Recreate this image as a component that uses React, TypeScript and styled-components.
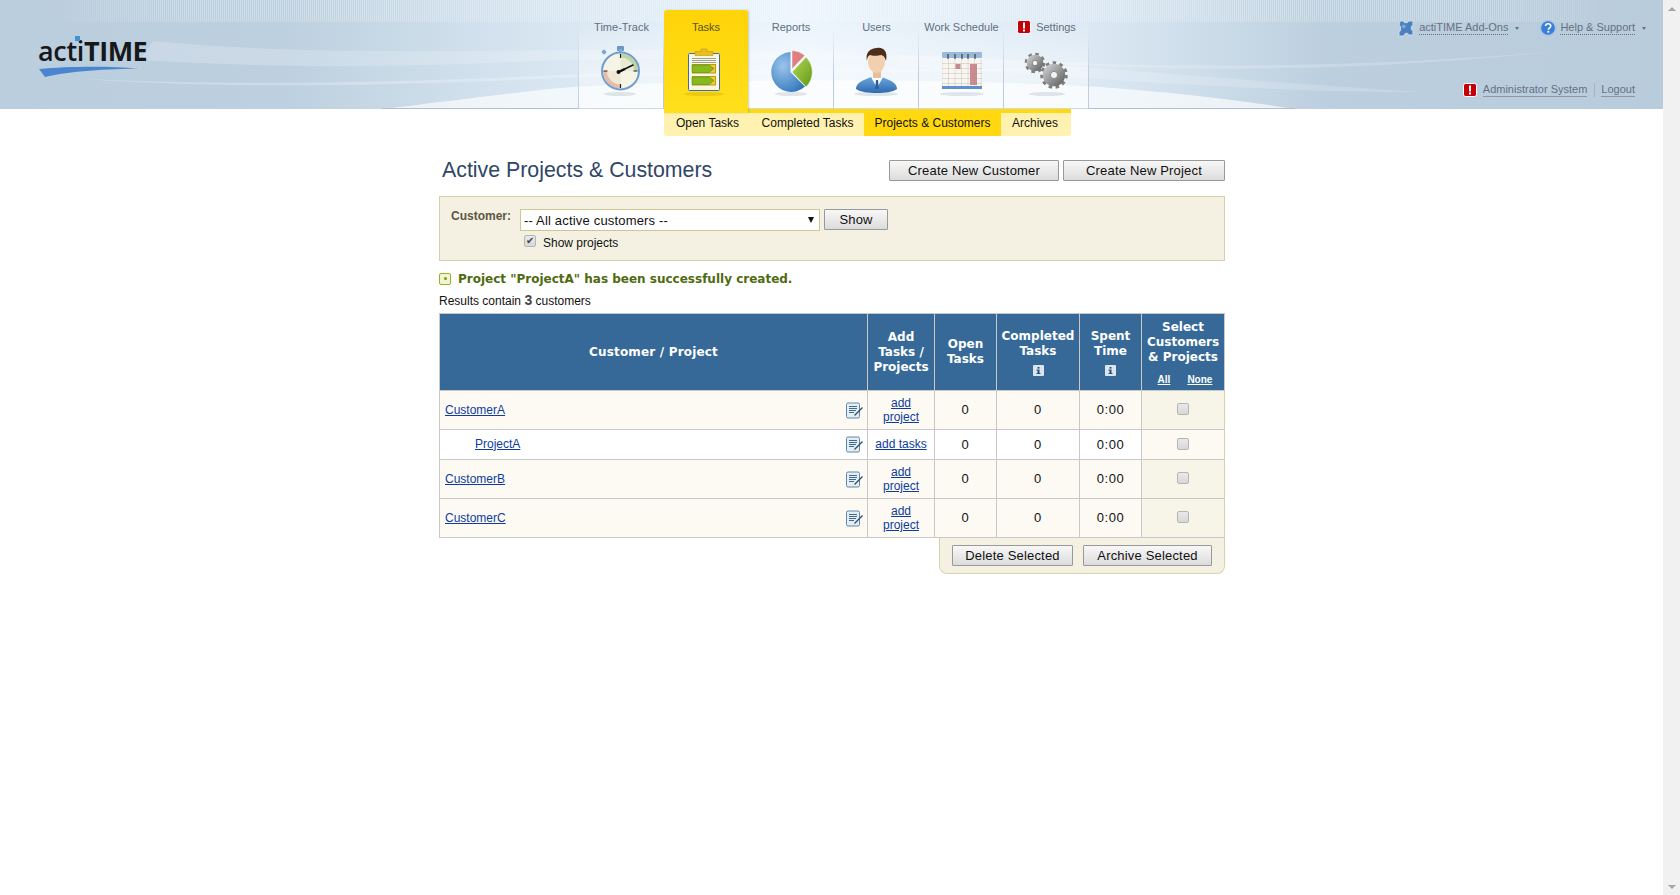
import React from "react";
import styled, { createGlobalStyle } from "styled-components";

const Global = createGlobalStyle`
  html, body { margin: 0; padding: 0; height: 100%; overflow: hidden; background: #fff; }
  body { font-family: "Liberation Sans", Arial, sans-serif; font-size: 12px; color: #111; }
  #root { height: 100%; }
`;

const Page = styled.div`display: flex; width: 1680px; height: 895px; overflow: hidden;`;
const Main = styled.div`flex: 1; min-width: 0;`;
const Scrollbar = styled.div`
  width: 17px; background: #f1f1f1; display: flex; flex-direction: column;
  justify-content: space-between; align-items: center; padding: 7px 0 6px; box-sizing: border-box;
`;
const Arrow = styled.div<{ $down?: boolean }>`
  width: 0; height: 0; border-left: 4px solid transparent; border-right: 4px solid transparent;
  ${(p) => (p.$down ? "border-top: 4px solid #a3a3a3;" : "border-bottom: 4px solid #a3a3a3;")}
`;

const Header = styled.header`position: relative; height: 109px; display: flex; box-sizing: border-box;`;
const HeaderArt = styled.svg`position: absolute; left: 0; top: 0; z-index: 0;`;
const LogoBlock = styled.div`
  position: relative; z-index: 1; width: 578px; flex: none; box-sizing: border-box; padding: 35px 0 0 38px;
`;
const LogoWrap = styled.div`position: relative; width: 110px;`;
const LogoText = styled.div`
  font-family: "Open Sans", "DejaVu Sans", sans-serif; font-size: 27px; line-height: 32px;
  color: #17181a; font-weight: 600; letter-spacing: -0.3px; white-space: nowrap;
  b { font-weight: 700; letter-spacing: -0.5px; }
`;
const LogoDot = styled.span`
  position: absolute; left: 37px; top: 1px; width: 5px; height: 5px; background: #3f93d6;
`;
const LogoSwoosh = styled.svg`display: block; margin: -1px 0 0 1px;`;

const Nav = styled.nav`
  position: relative; z-index: 1; display: flex; flex: none; border-left: 1px solid #c4d3e2;
  border-image: linear-gradient(to bottom, transparent 20%, #bccde0) 1;
`;
const Tab = styled.div<{ $w: number; $active?: boolean }>`
  position: relative; width: ${(p) => p.$w}px; box-sizing: border-box; margin-top: 10px; height: ${(p) => (p.$active ? 103 : 99)}px;
  padding-top: 10px; display: flex; flex-direction: column; align-items: center;
  border-radius: 3px 3px 0 0;
  background: ${(p) =>
    p.$active
      ? "linear-gradient(to bottom, #ffd408, #ffdf1c)"
      : "linear-gradient(to bottom, rgba(255,255,255,0) 10%, rgba(255,255,255,.42) 60%)"};
  ${(p) => p.$active && "box-shadow: 1px 0 2px rgba(120,120,90,.35); z-index: 2;"}
  ${(p) =>
    !p.$active &&
    `&::after { content: ""; position: absolute; right: 0; top: 18px; bottom: 0; width: 1px;
       background: linear-gradient(to bottom, rgba(188,205,224,0), #bccde0 60%); }`}
`;
const TabLabel = styled.div<{ $active?: boolean }>`
  display: flex; align-items: center; gap: 5px; height: 14px; font-size: 11px; line-height: 14px;
  white-space: nowrap; color: ${(p) => (p.$active ? "#5a5320" : "#626f7f")};
`;
const TabIcon = styled.svg`display: block; margin-top: 8px;`;

const RightBlock = styled.div`
  position: relative; z-index: 1; flex: 1; display: flex; flex-direction: column; align-items: flex-end;
  padding-top: 21px; box-sizing: border-box;
`;
const TopLinks = styled.div`display: flex; align-items: center; gap: 21px; padding-right: 17px; height: 14px;`;
const TopLink = styled.div`display: flex; align-items: center; gap: 4px; font-size: 11px; color: #65717f;`;
const Dotted = styled.span`border-bottom: 1px dotted #66717e; line-height: 13px;`;
const Caret = styled.span`
  width: 0; height: 0; border-left: 2.5px solid transparent; border-right: 2.5px solid transparent;
  border-top: 3px solid #66717e; margin-left: 3px;
`;
const UserLinks = styled.div`display: flex; align-items: center; margin-top: 48px; padding-right: 28px; height: 14px;`;
const UserLink = styled.span`border-bottom: 1px solid #8a97a5; font-size: 11px; line-height: 13px; color: #65717f;`;
const UserSep = styled.span`width: 1px; height: 14px; background: #a3b3c3; margin: 0 6px 0 7px;`;
const AlertWrap = styled.span`display: flex; margin-right: 6px;`;

const SubNav = styled.div`
  display: flex; width: 407px; height: 27px; margin-left: 664px; box-sizing: border-box; background: #fff1b0;
  border-top: 4px solid #ffd80f; border-radius: 0 0 3px 3px; overflow: hidden;
`;
const SubTab = styled.div<{ $w: number; $active?: boolean }>`
  width: ${(p) => p.$w}px; display: flex; align-items: center; justify-content: center;
  font-size: 12px; color: #111; white-space: nowrap; padding-bottom: 3px; box-sizing: border-box;
  background: ${(p) => (p.$active ? "#ffd80f" : "#fff1b0")};
`;

const Content = styled.main`width: 786px; margin-left: 439px;`;
const TitleRow = styled.div`display: flex; align-items: center; margin-top: 24px; height: 21px;`;
const Title = styled.h1`
  flex: 1; margin: 0 0 0 3px; font-size: 21.33px; font-weight: 400; color: #2f4666; white-space: nowrap;
`;
const Buttons = styled.div`display: flex; gap: 4px;`;
const Btn = styled.button<{ $w: number }>`
  width: ${(p) => p.$w}px; height: 21px; padding: 0; box-sizing: border-box; font-family: inherit;
  font-size: 13px; letter-spacing: .18px; color: #111; border: 1px solid #999; border-radius: 1px;
  background: linear-gradient(to bottom, #f8f8f8, #dcdcdc);
`;
const Filter = styled.section`
  margin-top: 15px; height: 65px; box-sizing: border-box; border: 1px solid #d6cfaa; background: #f5f1e2;
  display: flex; padding: 12px 0 0 12px;
`;
const FilterLabel = styled.label`
  width: 69px; font-size: 12px; font-weight: 700; color: #5c5743; line-height: 14px; flex: none; margin-left: -1px;
`;
const FilterCol = styled.div`display: flex; flex-direction: column;`;
const FilterRow = styled.div`display: flex; gap: 4px;`;
const SelectWrap = styled.div`position: relative; width: 300px; height: 22px;`;
const Select = styled.select`
  appearance: none; width: 100%; height: 100%; box-sizing: border-box; border: 1px solid #d0c690;
  background: #fff; font: 13px "Liberation Sans", Arial, sans-serif; letter-spacing: .18px; color: #111;
  padding: 0 0 0 3px; border-radius: 0; outline: none;
`;
const SelectArrow = styled.span`
  position: absolute; right: 6px; top: 8px; width: 0; height: 0; border-left: 3px solid transparent;
  border-right: 3px solid transparent; border-top: 6px solid #111;
`;
const CheckRow = styled.label`display: flex; align-items: center; gap: 7px; margin: 5px 0 0 4px; height: 13px; font-size: 12px; color: #111;`;
const Check = styled.input`
  appearance: none; margin: 0; width: 12px; height: 12px; border: 1px solid #b5b5b5; border-radius: 2px;
  background: linear-gradient(to bottom, #e9e9e9, #d8d8d8); position: relative; box-sizing: border-box; flex: none;
  &:checked::before {
    content: "✔"; position: absolute; left: 1px; top: -1px; font: 10px/12px "DejaVu Sans", sans-serif; color: #444;
  }
`;
const FilterCheck = styled(Check)`margin-top: -3px;`;
const Message = styled.div`
  display: flex; align-items: center; gap: 7px; margin-top: 10px; height: 15px;
  font-family: "DejaVu Sans", Verdana, sans-serif; font-weight: 700; font-size: 12px; color: #4f6a10; white-space: nowrap;
`;
const MsgIcon = styled.span`
  width: 10px; height: 10px; border: 1px solid #9ab02c; border-radius: 2px; background: #f1f5d2;
  display: flex; align-items: center; justify-content: center; flex: none;
  &::before { content: ""; width: 3px; height: 3px; border-radius: 50%; background: #7f9a1a; }
`;
const Results = styled.div`margin-top: 6px; height: 16px; line-height: 16px; font-size: 12px; color: #111; white-space: nowrap;`;
const Count = styled.b`font-size: 14px; font-weight: 700; color: #444;`;

const Table = styled.table`
  border-collapse: collapse; table-layout: fixed; width: 785px; margin-top: 5px;
`;
const Th = styled.th`
  background: #366997; color: #fff; border: 1px solid #c8c8c8; padding: 0; text-align: center; vertical-align: middle;
  font-family: "DejaVu Sans", Verdana, sans-serif; font-size: 12px; line-height: 15px; font-weight: 700; height: 76px;
`;
const WideTh = styled(Th)`letter-spacing: .17px;`;
const SelectTh = styled(Th)`padding-top: 2px; box-sizing: border-box;`;
const HeadLinks = styled.div`
  display: flex; justify-content: center; gap: 17px; margin-top: 9px; padding-left: 4px;
  font: 700 10px/12px "Liberation Sans", Arial, sans-serif;
`;
const HeadLink = styled.a`color: #fff; text-decoration: underline;`;
const InfoIcon = styled.svg`display: block; margin: 6px auto 0;`;
const Tr = styled.tr<{ $h: number }>`height: ${(p) => p.$h}px;`;
const Td = styled.td<{ $project?: boolean }>`
  border: 1px solid #c8c8c8; padding: 0; text-align: center; vertical-align: middle;
  background: ${(p) => (p.$project ? "#fff" : "#fdfaf3")};
  font-size: 13px; letter-spacing: .6px; color: #111;
`;
const NumberTd = styled(Td)`padding-bottom: ${(p) => (p.$project ? 0 : 2)}px;`;
const SelectTd = styled(Td)`
  background: ${(p) => (p.$project ? "#fcfaf3" : "#f7f4e8")};
  border-right-color: #d8d2ab; border-left-color: #d0cbb0;
`;
const NameCell = styled.div<{ $project?: boolean }>`
  display: flex; align-items: center; justify-content: space-between;
  padding: 0 4px 0 ${(p) => (p.$project ? 35 : 5)}px; letter-spacing: 0;
`;
const RowLink = styled.a<{ $raised?: boolean }>`
  font-size: 12px; color: #0d3b9e; text-decoration: underline; letter-spacing: 0;
  ${(p) => p.$raised && "margin-bottom: 2px;"}
`;
const AddCell = styled.div<{ $raised?: boolean }>`
  padding: 0 6px ${(p) => (p.$raised ? 2 : 0)}px; line-height: 14px; letter-spacing: 0; font-size: 12px;
`;
const RowCheck = styled(Check)`display: block; margin: 0 auto 2px;`;
const Footer = styled.div`
  display: flex; gap: 10px; justify-content: center; align-items: center; width: 286px; height: 36px; margin-left: auto;
  box-sizing: border-box; border: 1px solid #d8d2ab; border-top: 0; border-radius: 0 0 8px 8px; background: #f5f1e2;
  padding-bottom: 1px;
`;

const Alert = () => (
  <svg width="14" height="14" viewBox="0 0 14 14">
    <rect x="0.5" y="0.5" width="13" height="13" rx="2" fill="#c40006" stroke="#fff" />
    <rect x="6" y="2.5" width="2" height="6" fill="#fff" />
    <rect x="6" y="9.5" width="2" height="2" fill="#fff" />
  </svg>
);

const Shadow = ({ cx, rx }: { cx: number; rx: number }) => (
  <ellipse cx={cx} cy="52" rx={rx} ry="2" fill="#7f93a6" opacity=".22" />
);

const Stopwatch = () => (
  <TabIcon width="60" height="60" viewBox="0 0 60 60">
    <Shadow cx={28} rx={16} />
    <rect x="25" y="4" width="7" height="5" rx="1" fill="#6b97c8" />
    <rect x="27" y="7" width="3" height="4" fill="#8aaed4" />
    <rect x="10" y="8" width="4" height="4" rx="1" transform="rotate(-40 12 10)" fill="#7fa6cf" />
    <circle cx="28.500" cy="29" r="18.500" fill="#f6f4e4" stroke="#6f9ed2" strokeWidth="2" />
    <path d="M28.500 29 L28.500 11.500 A17.500 17.500 0 0 1 46 29 Z" fill="#a9c48c" opacity=".7" />
    <path d="M28.500 29 L11 29 A17.500 17.500 0 0 0 28.500 46.500 Z" fill="#dca691" opacity=".7" />
    <circle cx="28.500" cy="29" r="13.500" fill="#f6f4e4" opacity=".75" />
    <path d="M28.500 12v4M28.500 42v4M11.500 29h4M41.500 29h4" stroke="#222" strokeWidth="1.200" />
    <path d="M26.500 30 L41 23" stroke="#111" strokeWidth="1.500" strokeLinecap="round" />
    <path d="M26.500 30 L33 27" stroke="#111" strokeWidth="2.400" />
    <circle cx="26.500" cy="30" r="2" fill="#111" />
  </TabIcon>
);

const Clipboard = () => (
  <TabIcon width="60" height="60" viewBox="2 0 60 60">
    <ellipse cx="30" cy="52" rx="20" ry="2" fill="#b49a05" opacity=".28" />
    <rect x="14.500" y="11.500" width="31" height="37" rx="1" fill="#f9f6e4" stroke="#3a6cb6" />
    <path d="M21 13.500V9.500h6V7h6v2.500h6v4z" fill="#e8bf1c" stroke="#c9a212" strokeWidth=".7" />
    <path d="M18 16.500h24M18 18.500h24M18 20.500h24" stroke="#8a8a80" strokeWidth=".8" />
    <rect x="18.500" y="22.500" width="23" height="8.500" fill="#f6cc2a" stroke="#b69a18" />
    <path d="M18 23h17l5 3.500-5 4H18z" fill="#86b91f" stroke="#5e8d12" strokeWidth=".6" />
    <rect x="18.500" y="34.500" width="23" height="8.500" fill="#f6cc2a" stroke="#b69a18" />
    <path d="M18 35h17l5 3.500-5 4H18z" fill="#86b91f" stroke="#5e8d12" strokeWidth=".6" />
  </TabIcon>
);

const Pie = () => (
  <TabIcon width="60" height="60" viewBox="0 0 60 60">
    <defs>
      <radialGradient id="pieB" cx=".35" cy=".35" r=".8">
        <stop offset="0" stopColor="#9cc4ea" />
        <stop offset="1" stopColor="#2c74bc" />
      </radialGradient>
      <linearGradient id="pieG" x1="0" y1="0" x2="1" y2="1">
        <stop offset="0" stopColor="#b8d65a" />
        <stop offset="1" stopColor="#5f9a14" />
      </linearGradient>
    </defs>
    <Shadow cx={30} rx={16} />
    <path d="M29.500 10 A20 20 0 1 0 44 44.500 L29.500 30 Z" fill="url(#pieB)" />
    <path d="M31 8.500 A21 21 0 0 1 44 13.500 L31 27 Z" fill="#e07f80" stroke="#fff" strokeWidth=".5" />
    <path d="M45 15 A21 21 0 0 1 45 45 L31 30 Z" fill="url(#pieG)" stroke="#fff" strokeWidth=".5" />
  </TabIcon>
);

const Person = () => (
  <TabIcon width="60" height="60" viewBox="0 0 60 60">
    <defs>
      <linearGradient id="suit" x1="0" y1="0" x2="0" y2="1">
        <stop offset="0" stopColor="#6aa6dc" />
        <stop offset="1" stopColor="#2f6bae" />
      </linearGradient>
    </defs>
    <Shadow cx={29} rx={22} />
    <path d="M9 47c0-4 3-7 8-9l7-3h11l7 3c5 2 8 5 8 9-4 3-12 4-20 4s-17-1-21-4z" fill="url(#suit)" />
    <path d="M24 35l6 11 6-11-6-2z" fill="#fff" />
    <path d="M29 38h2l1 9h-4z" fill="#2b5f9e" />
    <rect x="26" y="27" width="8" height="9" fill="#e9bf9a" />
    <ellipse cx="29.500" cy="20" rx="8.500" ry="11" fill="#f2cfae" />
    <path d="M20 19c-2-8 3-13 10-13 7-1 11 4 9 13-1-4-3-6-5-6-3 1-9 1-11 0-2 1-3 3-3 6z" fill="#4d2d1c" />
  </TabIcon>
);

const Calendar = () => (
  <TabIcon width="60" height="60" viewBox="0 0 60 60">
    <defs>
      <pattern id="calGrid" width="6.500" height="5" patternUnits="userSpaceOnUse" x="17" y="17">
        <path d="M6.500 0V5M0 5H6.500" stroke="#8a8f9a" strokeWidth=".5" fill="none" />
      </pattern>
    </defs>
    <ellipse cx="30" cy="52" rx="22" ry="2" fill="#7f93a6" opacity=".22" />
    <rect x="10" y="10" width="40" height="37" rx="1" fill="#f8f6ee" />
    <rect x="10" y="10" width="40" height="6" rx="1" fill="#9bbadb" />
    <rect x="10" y="44" width="40" height="3" fill="#5e8fce" />
    <rect x="23.500" y="22" width="5" height="5" fill="#c8878c" />
    <rect x="38" y="22" width="7" height="21" fill="#cf8a8e" />
    <rect x="10" y="17" width="40" height="27" fill="url(#calGrid)" />
    <path d="M16 12v5M23 12v5M30 12v5M36 12v5M43 12v5" stroke="#222" strokeWidth="1" />
  </TabIcon>
);

const Gear = ({ cx, cy, r, n }: { cx: number; cy: number; r: number; n: number }) => {
  const c = 2 * Math.PI * r;
  const d = c / n / 2;
  return (
    <g>
      <circle cx={cx} cy={cy} r={r} fill="none" stroke="#7d7d7d" strokeWidth={r * 0.3} strokeDasharray={`${d} ${d}`} />
      <circle cx={cx} cy={cy} r={r * 0.62} fill="none" stroke="url(#gearFill)" strokeWidth={r * 0.62} />
      <circle cx={cx} cy={cy} r={r * 0.3} fill="none" stroke="#666" strokeWidth=".7" />
    </g>
  );
};

const Gears = () => (
  <TabIcon width="60" height="60" viewBox="0 0 60 60">
    <defs>
      <linearGradient id="gearFill" x1="0" y1="0" x2="1" y2="1">
        <stop offset="0" stopColor="#c4c4c4" />
        <stop offset="1" stopColor="#6e6e6e" />
      </linearGradient>
    </defs>
    <Shadow cx={30} rx={18} />
    <Gear cx={18} cy={21} r={9} n={8} />
    <Gear cx={37} cy={33} r={12} n={11} />
  </TabIcon>
);

const PuzzleIcon = () => (
  <svg width="17" height="17" viewBox="0 0 16 16">
    <path d="M2 1h3l1 1.500h3l1-1.500h4v4l-1.500 1v3l1.500 1v4h-4l-1-1.500H7L5 15H1v-4l1.500-1V6L1 5z" fill="#4a7fc0" stroke="#cfdcea" strokeWidth=".8" />
    <circle cx="5.500" cy="6" r="1.800" fill="#7ea7d6" />
  </svg>
);
const HelpIcon = () => (
  <svg width="16" height="16" viewBox="0 0 14 14">
    <circle cx="7" cy="7" r="6.500" fill="#3a7ed6" stroke="#a9c5e6" />
    <path d="M4.800 5.300C4.900 3.900 6 3.300 7.100 3.300c1.300 0 2.300.8 2.300 1.900 0 1.700-2.100 1.700-2.100 3.300" fill="none" stroke="#fff" strokeWidth="1.400" />
    <rect x="6.500" y="9.500" width="1.600" height="1.600" fill="#fff" />
  </svg>
);
const EditIcon = () => (
  <svg width="17" height="17" viewBox="0 0 17 17">
    <rect x="0.500" y="1" width="13" height="15" rx="1.500" fill="#e6eef5" stroke="#5f88ac" />
    <path d="M3 4.500h8M3 6.500h8M3 8.500h7M3 10.500h5" stroke="#3e6a90" />
    <path d="M16.500 5.500 L8.500 13.500" stroke="#2f4f6a" strokeWidth="1.300" />
    <path d="M7.500 14.500l1-1.500 .8.700z" fill="#e7a81a" />
  </svg>
);
const Info = () => (
  <InfoIcon width="11" height="11" viewBox="0 0 11 11">
    <rect width="11" height="11" rx="1" fill="#dbe6ef" />
    <rect x="4.500" y="2" width="2" height="1.600" fill="#24527e" />
    <path d="M3.500 4.500h3v3.500h1v1H3.500V8h1V5.500h-1z" fill="#24527e" />
  </InfoIcon>
);

const HeaderBackground = () => (
  <HeaderArt width="1663" height="109" viewBox="0 0 1663 109" preserveAspectRatio="none">
    <defs>
      <linearGradient id="sky" x1="0" y1="0" x2="1" y2="0">
        <stop offset="0" stopColor="#bbcedd" />
        <stop offset=".17" stopColor="#bdd0df" />
        <stop offset=".33" stopColor="#d8e6f1" />
        <stop offset=".48" stopColor="#ecf5fd" />
        <stop offset=".66" stopColor="#dbe8f3" />
        <stop offset=".8" stopColor="#bccfde" />
        <stop offset="1" stopColor="#b9ccdc" />
      </linearGradient>
      <linearGradient id="fade" x1="0" y1="0" x2="1" y2="0">
        <stop offset="0.03" stopColor="#000" />
        <stop offset=".14" stopColor="#fff" stopOpacity=".5" />
        <stop offset=".86" stopColor="#fff" stopOpacity=".5" />
        <stop offset=".97" stopColor="#000" />
      </linearGradient>
      <mask id="stripeMask"><rect width="1663" height="22" fill="url(#fade)" /></mask>
      <pattern id="stripes" width="2" height="22" patternUnits="userSpaceOnUse">
        <rect width="1" height="22" fill="#fff" opacity=".55" />
      </pattern>
    </defs>
    <rect width="1663" height="109" fill="url(#sky)" />
    <rect width="1663" height="22" fill="url(#stripes)" mask="url(#stripeMask)" />
    <path d="M153 41C250 50 350 53 560 50C700 48 950 55 1100 64C1250 68 1400 65 1570 50C1400 68 1250 72 1100 66C950 60 700 58 560 60C350 70 250 66 140 60Z" fill="#fff" opacity=".2" />
    <path d="M900 55C1050 62 1200 78 1420 92C1250 92 1100 78 900 66Z" fill="#fff" opacity=".18" />
    <path d="M80 79C220 85 360 84 560 75C700 70 900 70 1100 68C900 74 700 73 560 78C360 87 220 88 80 79Z" fill="#fff" opacity=".25" />
    <path d="M382 109C450 101 500 94 560 88C700 78 950 78 1100 87C1170 92 1240 100 1295 109Z" fill="#fff" opacity=".66" />
    <rect x="382" y="108" width="913" height="1" fill="#afc0d0" />
  </HeaderArt>
);

const tabs = [
  { label: "Time-Track", w: 85, icon: <Stopwatch /> },
  { label: "Tasks", w: 84, active: true, icon: <Clipboard /> },
  { label: "Reports", w: 86, icon: <Pie /> },
  { label: "Users", w: 85, icon: <Person /> },
  { label: "Work Schedule", w: 85, icon: <Calendar /> },
  { label: "Settings", w: 85, alert: true, icon: <Gears /> },
];

const rows = [
  { name: "CustomerA", h: 39 },
  { name: "ProjectA", h: 30, project: true },
  { name: "CustomerB", h: 39 },
  { name: "CustomerC", h: 39 },
];

export default function App() {
  return (
    <Page>
      <Global />
      <Main>
        <Header>
          <HeaderBackground />
          <LogoBlock>
            <LogoWrap>
              <LogoText>acti<b>TIME</b></LogoText>
              <LogoDot />
              <LogoSwoosh width="100" height="13" viewBox="0 0 100 13">
                <path d="M0 3C30 0 70 0 100 2.500C70 3 30 5 6 11Z" fill="#4a86cf" />
              </LogoSwoosh>
            </LogoWrap>
          </LogoBlock>
          <Nav>
            {tabs.map((t) => (
              <Tab key={t.label} $w={t.w} $active={t.active}>
                <TabLabel $active={t.active}>
                  {t.alert && <Alert />}
                  {t.label}
                </TabLabel>
                {t.icon}
              </Tab>
            ))}
          </Nav>
          <RightBlock>
            <TopLinks>
              <TopLink><PuzzleIcon /><Dotted>actiTIME Add-Ons</Dotted><Caret /></TopLink>
              <TopLink><HelpIcon /><Dotted>Help &amp; Support</Dotted><Caret /></TopLink>
            </TopLinks>
            <UserLinks>
              <AlertWrap><Alert /></AlertWrap>
              <UserLink>Administrator System</UserLink>
              <UserSep />
              <UserLink>Logout</UserLink>
            </UserLinks>
          </RightBlock>
        </Header>
        <SubNav>
          <SubTab $w={87}>Open Tasks</SubTab>
          <SubTab $w={113}>Completed Tasks</SubTab>
          <SubTab $w={137} $active>Projects &amp; Customers</SubTab>
          <SubTab $w={68}>Archives</SubTab>
        </SubNav>
        <Content>
          <TitleRow>
            <Title>Active Projects &amp; Customers</Title>
            <Buttons>
              <Btn $w={170}>Create New Customer</Btn>
              <Btn $w={162}>Create New Project</Btn>
            </Buttons>
          </TitleRow>
          <Filter>
            <FilterLabel>Customer:</FilterLabel>
            <FilterCol>
              <FilterRow>
                <SelectWrap>
                  <Select defaultValue="all">
                    <option value="all">-- All active customers --</option>
                  </Select>
                  <SelectArrow />
                </SelectWrap>
                <Btn $w={64}>Show</Btn>
              </FilterRow>
              <CheckRow><FilterCheck type="checkbox" defaultChecked />Show projects</CheckRow>
            </FilterCol>
          </Filter>
          <Message><MsgIcon />Project "ProjectA" has been successfully created.</Message>
          <Results>Results contain <Count>3</Count> customers</Results>
          <Table>
            <colgroup>
              <col style={{ width: 428 }} />
              <col style={{ width: 67 }} />
              <col style={{ width: 62 }} />
              <col style={{ width: 83 }} />
              <col style={{ width: 62 }} />
              <col style={{ width: 83 }} />
            </colgroup>
            <thead>
              <tr>
                <WideTh>Customer / Project</WideTh>
                <Th>Add<br />Tasks /<br />Projects</Th>
                <Th>Open<br />Tasks</Th>
                <Th>Completed<br />Tasks<Info /></Th>
                <Th>Spent<br />Time<Info /></Th>
                <SelectTh>
                  Select<br />Customers<br />&amp; Projects
                  <HeadLinks><HeadLink>All</HeadLink><HeadLink>None</HeadLink></HeadLinks>
                </SelectTh>
              </tr>
            </thead>
            <tbody>
              {rows.map((r) => (
                <Tr key={r.name} $h={r.h}>
                  <Td $project={r.project}>
                    <NameCell $project={r.project}>
                      <RowLink $raised={r.project}>{r.name}</RowLink>
                      <EditIcon />
                    </NameCell>
                  </Td>
                  <Td $project={r.project}>
                    <AddCell $raised={r.project}><RowLink>{r.project ? "add tasks" : "add project"}</RowLink></AddCell>
                  </Td>
                  <NumberTd $project={r.project}>0</NumberTd>
                  <NumberTd $project={r.project}>0</NumberTd>
                  <NumberTd $project={r.project}>0:00</NumberTd>
                  <SelectTd $project={r.project}><RowCheck type="checkbox" /></SelectTd>
                </Tr>
              ))}
            </tbody>
          </Table>
          <Footer>
            <Btn $w={121}>Delete Selected</Btn>
            <Btn $w={129}>Archive Selected</Btn>
          </Footer>
        </Content>
      </Main>
      <Scrollbar>
        <Arrow />
        <Arrow $down />
      </Scrollbar>
    </Page>
  );
}
